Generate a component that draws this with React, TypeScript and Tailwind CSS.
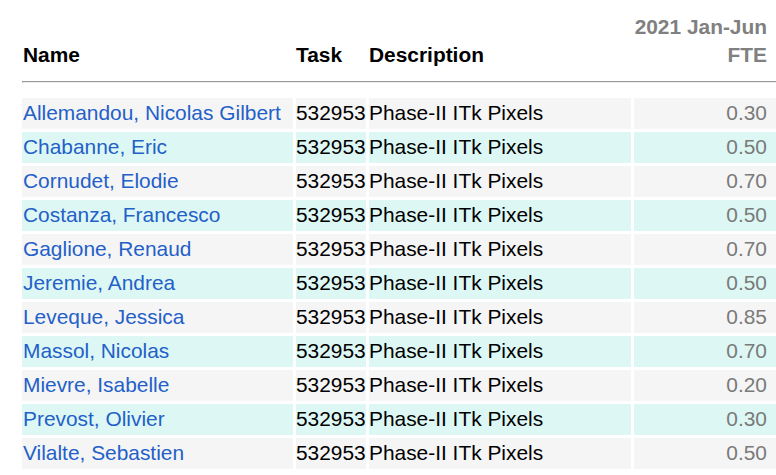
import React from "react";

const rows: [string, string][] = [
  ["Allemandou, Nicolas Gilbert", "0.30"],
  ["Chabanne, Eric", "0.50"],
  ["Cornudet, Elodie", "0.70"],
  ["Costanza, Francesco", "0.50"],
  ["Gaglione, Renaud", "0.70"],
  ["Jeremie, Andrea", "0.50"],
  ["Leveque, Jessica", "0.85"],
  ["Massol, Nicolas", "0.70"],
  ["Mievre, Isabelle", "0.20"],
  ["Prevost, Olivier", "0.30"],
  ["Vilalte, Sebastien", "0.50"],
];

export default function App() {
  return (
    <div
      className="w-[776px] h-[475px] overflow-hidden bg-white pl-[22px] pt-[13px] text-[20.9px] text-black"
      style={{ fontFamily: '"Liberation Sans", Arial, sans-serif' }}
    >
      <div className="grid grid-cols-[271px_70px_262px_1fr] gap-x-[3px] items-end font-bold leading-[28px]">
        <div className="pl-[1px]">Name</div>
        <div>Task</div>
        <div>Description</div>
        <div className="pr-[9px] text-right text-[#808080]">
          <div>2021 Jan-Jun</div>
          <div>FTE</div>
        </div>
      </div>
      <div className="mt-[12px] h-[2px] border-t border-l border-t-[#9a9a9a] border-l-[#9a9a9a] border-b border-b-[#eeeeee]" />
      <div className="mt-[15px] grid grid-cols-[271px_70px_262px_1fr] gap-[3px] leading-[30px]">
        {rows.map(([name, fte], i) => {
          const bg = i % 2 === 0 ? "bg-[#f5f5f5]" : "bg-[#ddf8f4]";
          return (
            <React.Fragment key={name}>
              <div className={`${bg} h-[31px] pl-[1px] text-[#2360c8] whitespace-nowrap`}>{name}</div>
              <div className={`${bg} h-[31px] whitespace-nowrap`}>532953</div>
              <div className={`${bg} h-[31px] whitespace-nowrap`}>Phase-II ITk Pixels</div>
              <div className={`${bg} h-[31px] pr-[9px] text-right text-[#7a7a7a]`}>{fte}</div>
            </React.Fragment>
          );
        })}
      </div>
    </div>
  );
}
